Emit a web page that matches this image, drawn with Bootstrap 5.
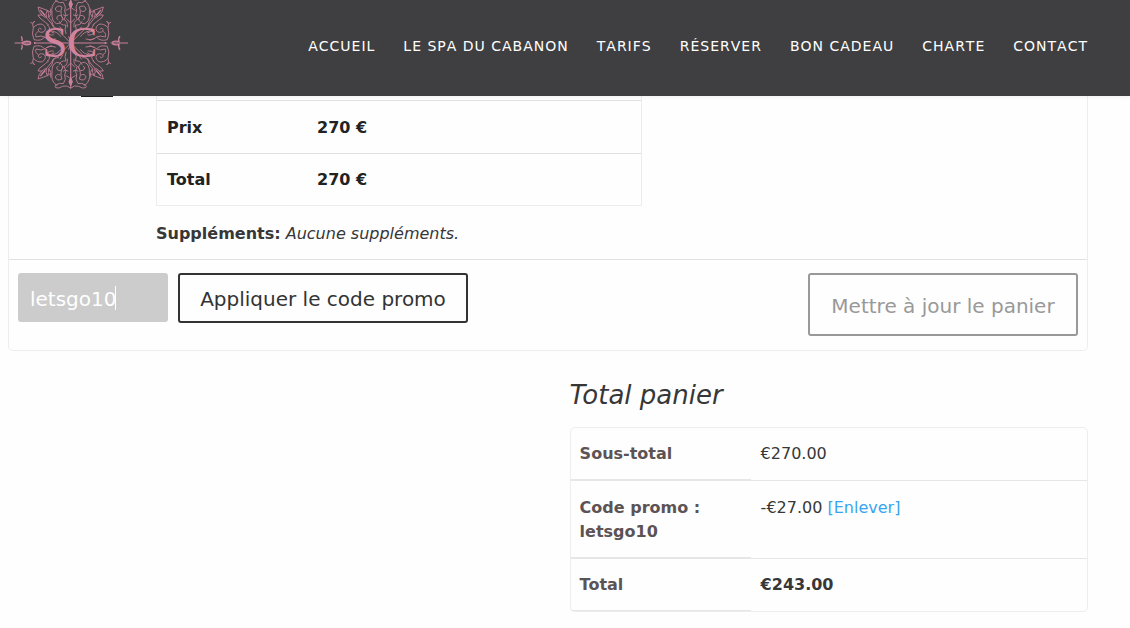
<!DOCTYPE html>
<html lang="fr">
<head>
<meta charset="utf-8">
<meta name="viewport" content="width=device-width, initial-scale=1">
<title>Panier</title>
<link href="https://cdn.jsdelivr.net/npm/bootstrap@5.3.0/dist/css/bootstrap.min.css" rel="stylesheet">
<style>
body{font-family:Verdana,"DejaVu Sans",sans-serif;font-size:16px;line-height:24px;color:#373737;background:#fefefe}
.site-header{background:#3f3f41;min-height:96px;padding:0 42px 0 8px;box-shadow:0 0 5px rgba(0,0,0,.08)}
.site-header .navbar-brand{padding:0;margin:0}
.site-header svg{display:block}
.menu{gap:28px;padding-bottom:4px}
.site-header .menu .nav-link{padding:0;color:#fff;font-size:14px;letter-spacing:1px;font-kerning:none;text-transform:uppercase}
.page{padding:0 42px 16px 8px}
.cart-box{border:1px solid #ededed;border-top:0;border-radius:0 0 5px 5px}
.item-row{border-bottom:1px solid #e2e2e2;padding-bottom:13px}
.thumb-col{width:147px;flex:none}
.thumb{width:32px;height:1px;background:#222;margin-left:72px}
.details{width:486px;border:1px solid #ececec;border-top:0;border-collapse:separate;border-spacing:0;color:#222;font-weight:700}
.details th,.details td{padding:14px 10px 13px;border-top:1px solid #e0e0e0}
.details th{width:150px}
.details tr:first-child>*{padding-top:15px}
.edge{height:4px;width:486px;border:solid #ececec;border-width:0 1px}
.actions{padding:13px 9px 14px}
.promo{gap:10px}
.code-field{width:150px}
.code{height:49px;background:#ccc;color:#fff;border:0;border-radius:3px;padding:2px 12px 0;font-size:20px;line-height:normal}
.code:focus{background:#ccc;color:#fff;box-shadow:none}
.caret{position:absolute;left:97px;top:13px;width:1px;height:24px;background:#fff}
.btn-line{font-size:20px;line-height:24px;border:2px solid #333;border-radius:3px;color:#333;padding:12px 20px 10px;height:50px;width:290px;white-space:nowrap}
.btn-line:disabled{border-color:#999;color:#999;opacity:1;height:63px;width:270px;padding:15px 18px 13px}
.totals{width:48%}
.totals h2{font-size:26px;line-height:32px;font-style:italic;font-weight:400;margin:28px 0 16px}
.sums{border:1px solid #ededed;border-radius:5px;border-collapse:separate;border-spacing:0;width:100%}
.sums th,.sums td{padding:14px 10px 13px;vertical-align:top;border-bottom:1px solid #e6e6e6}
.sums th{width:180px;padding-left:9px;color:#5c5355;border-bottom-width:2px}
.sums tr:nth-child(2)>*{padding-top:15px}
.sums tr:last-child td{border-bottom:0;font-weight:700}
.sums tr:last-child th{border-bottom-width:1px}
.sums a{color:#39a5f0;text-decoration:none}
</style>
</head>
<body>
<header class="site-header navbar navbar-expand d-flex justify-content-between align-items-center">
<a class="navbar-brand" href="#" aria-label="Le Spa du Cabanon">
<svg width="126" height="96" viewBox="0 0 378 288">
<defs>
<g id="quarter" fill="none" stroke="#b5788c" stroke-width="3" stroke-linecap="round">
<path d="M0 0V135M0 0L42 42M0 135Q12 125 24 130Q36 138 45 134Q50 126 40 126" />
<path d="M10 48Q8 66 20 70Q10 84 18 96Q12 108 22 122Q34 118 44 126Q60 112 56 90Q58 64 42 58Q26 58 24 74Q28 88 40 80Q46 72 38 70" />
<path d="M22 70Q34 88 26 108Q42 116 46 102Q42 90 32 96M8 84Q16 78 22 84M4 104L14 98M0 60L12 72M14 28Q20 42 14 54Q30 52 34 64" />
<path d="M46 44L84 90M52 48Q54 68 66 76Q64 90 70 98L98 108Q96 92 86 84L98 84Q94 74 86 70Q76 62 66 54M70 98Q78 86 72 78M70 98L60 92M86 84L76 76M64 78Q56 88 60 102" />
<path d="M46 12Q66 6 78 18Q88 4 110 10Q118 26 112 46Q118 58 108 66Q116 54 120 62M112 46Q100 60 84 56Q70 44 80 34Q94 28 98 40Q94 48 88 42M78 18Q88 24 104 18Q108 30 98 34M52 24Q66 22 72 34Q60 38 50 30M58 8L72 14M66 38Q58 44 70 54" />
<path d="M30 20Q40 34 56 36M36 44Q50 42 56 54M24 36L32 48" />
<path d="M-4 116L0 106L4 116L0 126ZM78 84L90 98" fill="#c97f98" stroke="#cb809b" stroke-width="4"/>
</g>
</defs>
<g transform="translate(188 129)">
<use href="#quarter"/><use href="#quarter" transform="scale(-1 1)"/>
<use href="#quarter" transform="scale(1 -1)"/><use href="#quarter" transform="scale(-1 -1)"/>
<g stroke="#cb809b" stroke-width="3" fill="none">
<path d="M-168 0H-120M120 0H172M-110 0H110M-6 -20L6 20M6 -20L-6 20" />
<path d="M-148 -20Q-144 -12 -146 -5M-148 20Q-144 12 -146 5M-146 0Q-136 -8 -122 -4Q-118 0 -122 4Q-136 8 -146 0M148 -20Q142 -14 145 -4Q134 -8 124 -2M148 20Q142 14 145 4Q134 8 124 2M104 -3V3M-108 -3V3" stroke-width="4"/>
</g>
<g font-family="Liberation Serif,serif" font-size="136" fill="#d2839e">
<text x="-85" y="43">S</text><text x="-10" y="43">C</text>
</g>
</g>
</svg>
</a>
<nav aria-label="Menu principal"><ul class="menu navbar-nav">
<li><a class="nav-link" href="#">Accueil</a></li>
<li><a class="nav-link" href="#">Le Spa du Cabanon</a></li>
<li><a class="nav-link" href="#">Tarifs</a></li>
<li><a class="nav-link" href="#">Réserver</a></li>
<li><a class="nav-link" href="#">Bon cadeau</a></li>
<li><a class="nav-link" href="#">Charte</a></li>
<li><a class="nav-link" href="#">Contact</a></li>
</ul></nav>
</header>
<main class="page">
<form class="cart-box" onsubmit="return false">
<div class="item-row d-flex">
<div class="thumb-col"><div class="thumb"></div></div>
<div>
<div class="edge"></div>
<table class="details">
<tbody><tr><th scope="row">Prix</th><td>270 €</td></tr>
<tr><th scope="row">Total</th><td>270 €</td></tr></tbody>
</table>
<p class="mb-0 mt-3"><strong>Suppléments:</strong> <em>Aucune suppléments.</em></p>
</div>
</div>
<div class="actions d-flex justify-content-between align-items-start">
<div class="promo d-flex">
<div class="code-field position-relative">
<input class="code form-control" id="code" type="text" value="letsgo10" aria-label="Code promo">
<span class="caret" aria-hidden="true"></span>
</div>
<button class="btn btn-line" type="submit">Appliquer le code promo</button>
</div>
<button class="btn btn-line" type="button" disabled>Mettre à jour le panier</button>
</div>
</form>
<section class="totals ms-auto">
<h2>Total panier</h2>
<table class="sums">
<tbody><tr><th scope="row">Sous-total</th><td>€270.00</td></tr>
<tr><th scope="row">Code promo : letsgo10</th><td>-€27.00 <a href="#">[Enlever]</a></td></tr>
<tr><th scope="row">Total</th><td>€243.00</td></tr></tbody>
</table>
</section>
</main>
<script src="https://cdn.jsdelivr.net/npm/bootstrap@5.3.0/dist/js/bootstrap.bundle.min.js"></script>
</body>
</html>
